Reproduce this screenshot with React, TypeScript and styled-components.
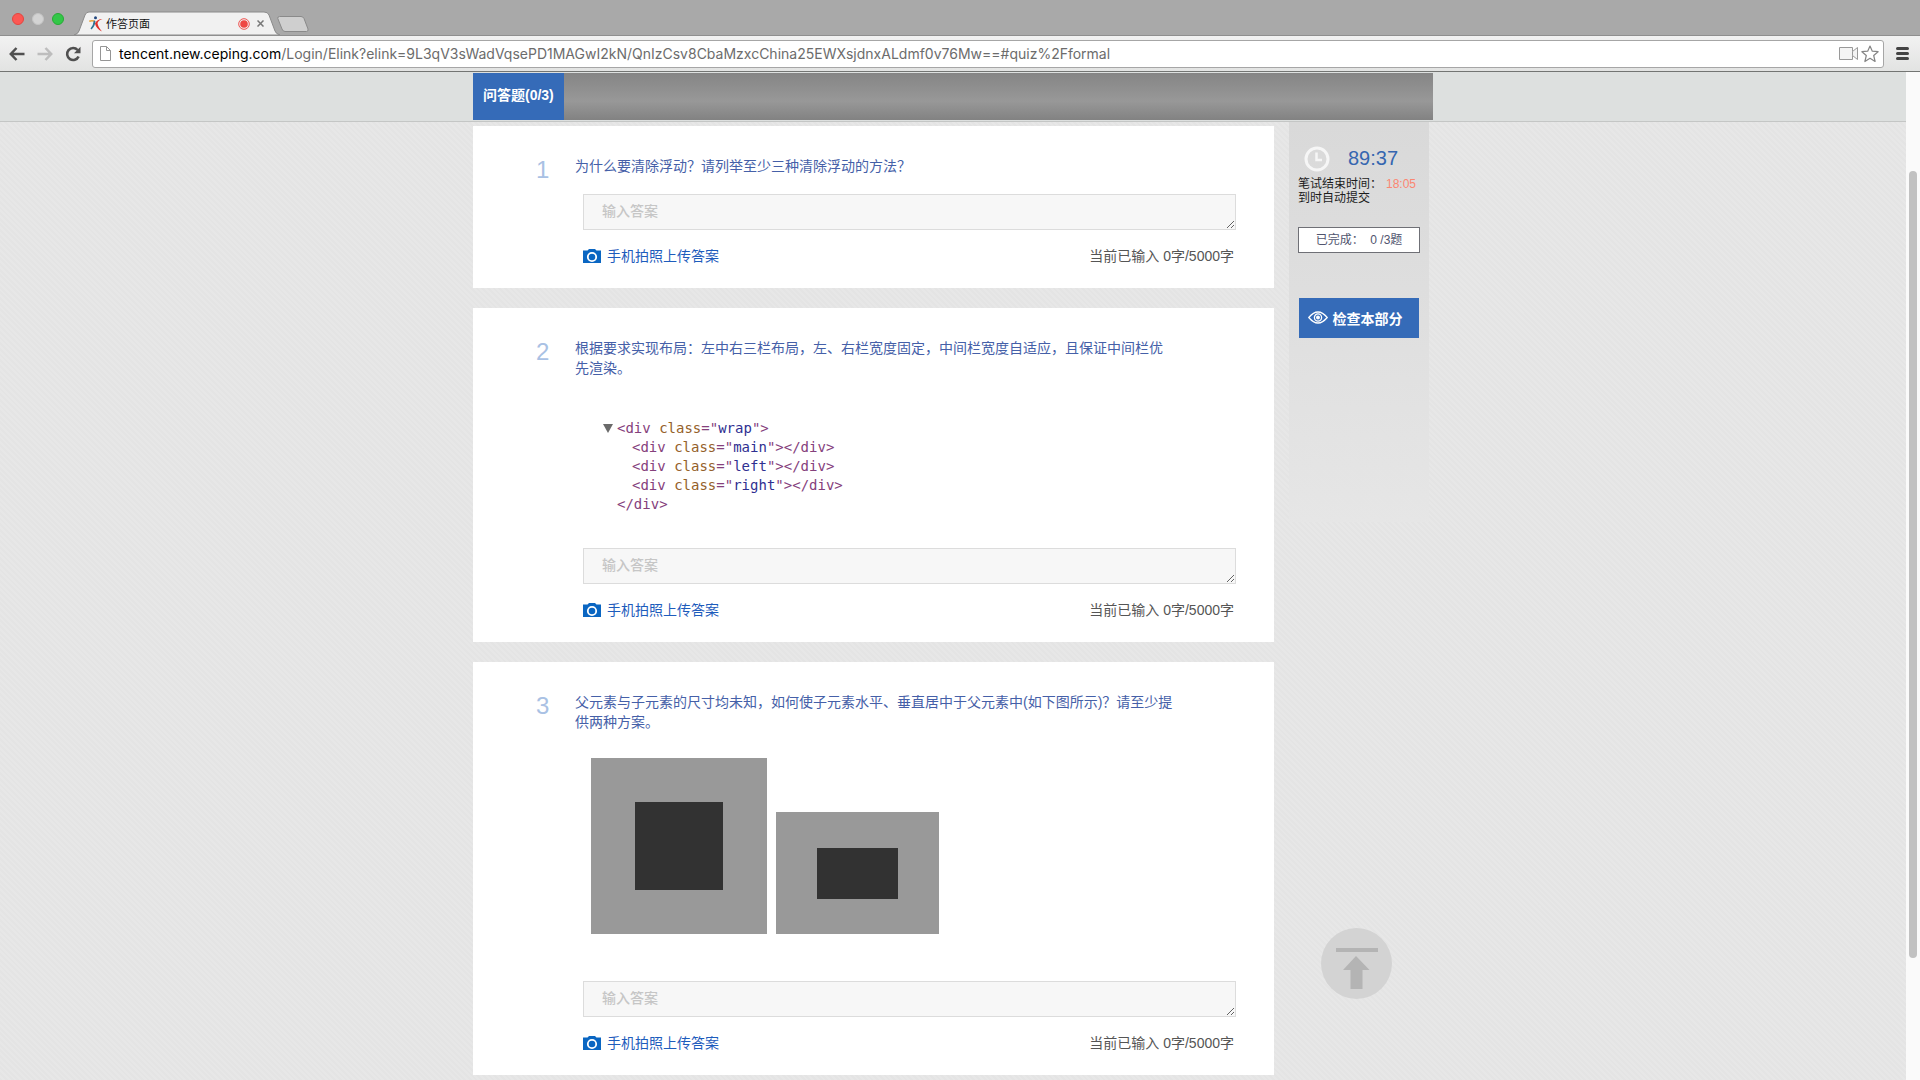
import React from "react";
import styled, { createGlobalStyle } from "styled-components";

const sans = `"Liberation Sans", "Noto Sans CJK SC", sans-serif`;

const GlobalStyle = createGlobalStyle`
  *, *::before, *::after { box-sizing: border-box; }
  body { margin: 0; font-family: ${sans}; font-size: 14px; line-height: 20px; color: #555; }
  button, textarea, input { font-family: inherit; font-size: inherit; }
`;

const Window = styled.div`
  display: flex;
  flex-direction: column;
  min-height: 100vh;
`;

/* ---------- browser chrome ---------- */

const TabStrip = styled.div`
  display: flex;
  align-items: flex-end;
  height: 35px;
  padding-left: 12px;
  background: #a9a9a9;
`;

const Lights = styled.div`
  display: flex;
  gap: 8px;
  padding-bottom: 10px;
`;

const Light = styled.button<{ $color: string; $edge: string }>`
  width: 12px;
  height: 12px;
  padding: 0;
  border: 1px solid ${(p) => p.$edge};
  border-radius: 50%;
  background: ${(p) => p.$color};
`;

const Tab = styled.div`
  display: grid;
  width: 206px;
  height: 24px;
  margin-left: 10px;

  > * { grid-area: 1 / 1; }
`;

const TabShape = styled.svg`
  display: block;
  width: 100%;
  height: 24px;
`;

const TabContent = styled.div`
  display: flex;
  align-items: center;
  gap: 3px;
  padding: 1px 16px 0 15px;
  font-size: 11px;
  line-height: 16px;
  color: #111;
`;

const TabTitle = styled.span`
  flex: 1;
`;

const IconButton = styled.button`
  display: flex;
  padding: 0;
  border: 0;
  background: none;
`;

const CloseTab = styled(IconButton)`
  margin-left: 4px;
`;

const NewTab = styled(IconButton)`
  padding-bottom: 3px;
  margin-left: -3px;
`;

const Toolbar = styled.div`
  display: flex;
  align-items: center;
  height: 37px;
  padding: 0 11px 0 9px;
  border-top: 1px solid #8f8f8f;
  border-bottom: 1px solid #737573;
  background: linear-gradient(#f2f2f2, #e2e3e2);
`;

const NavButtons = styled.div`
  display: flex;
  gap: 12px;
  margin-right: 11px;
`;

const AddressBar = styled.div`
  display: flex;
  flex: 1;
  align-items: center;
  height: 28px;
  padding: 0 4px 0 7px;
  margin-right: 12px;
  border: 1px solid #a6a6a6;
  border-radius: 3px;
  background: #fff;
`;

const Url = styled.div`
  flex: 1;
  margin-left: 8px;
  font-family: Inter, sans-serif;
  font-size: 14px;
  line-height: 20px;
  color: #6c6c6c;

  b { font-weight: 400; color: #000; }
`;

const Star = styled(IconButton)`
  margin-left: 2px;
`;

/* ---------- page ---------- */

const Viewport = styled.div`
  display: flex;
  flex: 1;
`;

const Page = styled.div`
  flex: 1;
  background: repeating-linear-gradient(45deg, #e4e4e4 0 2px, #e7e7e7 2px 4px);
`;

const ScrollTrack = styled.div`
  display: grid;
  grid-template-rows: 99fr 787fr 122fr;
  width: 14px;
  padding: 0 3px;
  background: #fafafa;
`;

const ScrollThumb = styled.div`
  grid-row: 2;
  border-radius: 4px;
  background: #c1c1c1;
`;

const Header = styled.header`
  padding: 1px 0;
  border-bottom: 1px solid #c4c6c5;
  background: #dde0df;
`;

const HeaderNav = styled.nav`
  display: flex;
  max-width: 960px;
  height: 47px;
  margin: 0 auto;
  background: linear-gradient(#858585, #989898 60%, #828282);
`;

const SectionTab = styled.button`
  padding: 0 10px 6px;
  border: 0;
  background: #356bb8;
  color: #fff;
  font-weight: 700;
`;

const Columns = styled.div`
  display: flex;
  align-items: flex-start;
  gap: 15px;
  max-width: 960px;
  margin: 0 auto;
`;

const Questions = styled.main`
  display: flex;
  flex: 1;
  flex-direction: column;
  gap: 20px;
  padding: 4px 0 5px;
`;

const Card = styled.section`
  padding: 30px 38px 22px 63px;
  background: #fff;
`;

const Prompt = styled.div`
  display: grid;
  grid-template-columns: 39px minmax(0, 600px);
`;

const Index = styled.span`
  font-size: 24px;
  line-height: 28px;
  height: 20px;
  color: #a9c1e4;
`;

const PromptText = styled.label`
  color: #4560a8;
`;

const Answer = styled.div`
  margin-left: 47px;
`;

const AnswerBox = styled.textarea`
  display: block;
  width: 100%;
  height: 36px;
  padding: 6px 18px;
  border: 1px solid #dcdcdc;
  border-radius: 0;
  background: #f7f7f7;
  line-height: 20px;
  resize: vertical;
  overflow: hidden;

  &::placeholder { color: #c6c6c6; font-weight: 500; }
`;

const AnswerFooter = styled.div`
  display: flex;
  align-items: center;
  justify-content: space-between;
  padding: 16px 2px 0 0;
`;

const UploadLink = styled.a`
  display: flex;
  align-items: center;
  gap: 6px;
  color: #1d5cbc;
  text-decoration: none;
`;

const Figure = styled.div<{ $top: number; $bottom: number; $left: number }>`
  padding: ${(p) => `${p.$top}px 0 ${p.$bottom}px ${p.$left}px`};
`;

const Code = styled.pre`
  margin: 0;
  font-family: "DejaVu Sans Mono", monospace;
  font-size: 14px;
  line-height: 19px;
  color: #85407c;
`;

const CodeLine = styled.div<{ $indent: number }>`
  display: flex;
  align-items: center;
  padding-left: ${(p) => p.$indent}px;
`;

const Attr = styled.span`
  color: #94602a;
`;

const Value = styled.span`
  color: #2f3091;
`;

const Caret = styled.span`
  width: 10px;
  height: 9px;
  margin-right: 4px;
  clip-path: polygon(0 0, 100% 0, 50% 100%);
  background: #6a6a6a;
`;

const Boxes = styled.div`
  display: flex;
  align-items: flex-end;
  gap: 9px;
`;

const Outer = styled.div<{ $w: number; $h: number }>`
  display: grid;
  place-items: center;
  width: ${(p) => p.$w}px;
  height: ${(p) => p.$h}px;
  background: #999;
`;

const Inner = styled.div<{ $h: number }>`
  width: 50%;
  height: ${(p) => p.$h}px;
  background: #323232;
`;

const Side = styled.aside`
  display: flex;
  flex-direction: column;
  width: 140px;
  min-height: 400px;
  padding: 24px 9px 0;
  margin-right: 4px;
  background: linear-gradient(#d9d9d9, #dfdfdf 50%, rgba(230, 230, 230, 0.9));
  font-size: 12px;
  line-height: 14px;
  color: #1c1c1c;
`;

const Timer = styled.div`
  display: flex;
  align-items: center;
  gap: 18px;
  padding: 0 0 5px 6px;
  font-size: 20px;
  line-height: 26px;
  color: #3566b0;
`;

const TimeLeft = styled.span`
  padding-bottom: 2px;
  line-height: 24px;
`;

const EndTime = styled.span`
  color: #fb8672;
`;

const EndRow = styled.div`
  display: flex;
  justify-content: space-between;
  padding-right: 4px;
`;

const Done = styled.div`
  margin-top: 22px;
  border: 1px solid #6f7076;
  background: #fff;
  line-height: 24px;
  text-align: center;
  white-space: pre;
  color: #50546e;
`;

const CheckButton = styled.button`
  display: flex;
  align-items: center;
  justify-content: center;
  gap: 5px;
  height: 40px;
  padding: 0 8px 1px 0;
  margin: 45px 1px 0;
  border: 0;
  background: #356bb8;
  color: #fff;
  font-size: 14px;
  font-weight: 700;
`;

const TopButton = styled(IconButton)`
  position: fixed;
  right: 528px;
  bottom: 81px;
`;

/* ---------- icons ---------- */

const Favicon = () => (
  <svg width="14" height="16" viewBox="0 0 14 16">
    <circle cx="6.500" cy="1.800" r="1.500" fill="#23477f" />
    <path d="M0 4.500Q3 3.500 6 4.500L5.500 6Q3 5 .5 6Z" fill="#e9a33a" />
    <path d="M4.800 4.500L6.500 5Q6 10.500 2.500 13.500L1.500 12.500Q4.500 9 4.800 4.500Z" fill="#2f7393" />
    <path d="M13.500 3Q9.500 4 8.500 7Q9 11 13 15.500Q7 12.500 6 7.500Q8 3 13.500 3Z" fill="#e1302a" />
  </svg>
);

const RecordIcon = () => (
  <svg width="12" height="12" viewBox="0 0 12 12">
    <circle cx="6" cy="6" r="5.300" fill="none" stroke="#ee5350" strokeWidth="1" />
    <circle cx="6" cy="6" r="3.800" fill="#ee4744" />
  </svg>
);

const CloseIcon = () => (
  <svg width="7" height="7" viewBox="0 0 7 7" stroke="#777" strokeWidth="1.500">
    <path d="M.5 .5 6.500 6.500M6.500 .5 .5 6.500" />
  </svg>
);

const ArrowIcon = ({ color, flip }: { color: string; flip?: boolean }) => (
  <svg width="16" height="16" viewBox="0 0 16 16" fill="none" stroke={color} strokeWidth="2.500">
    <path d={flip ? "M.5 8H14M8.500 2 14.200 8 8.500 14" : "M15.500 8H2M7.500 2 1.800 8 7.500 14"} />
  </svg>
);

const ReloadIcon = () => (
  <svg width="16" height="16" viewBox="0 0 16 16">
    <path d="M12.600 4A6 6 0 1 0 13.600 10.500" fill="none" stroke="#505050" strokeWidth="2.600" />
    <path d="M15.500 .8V7.200H9Z" fill="#505050" />
  </svg>
);

const FileIcon = () => (
  <svg width="11" height="15" viewBox="0 0 11 15" fill="#fff" stroke="#959595">
    <path d="M.5 .5H6.500L10.500 4.500V14.500H.5ZM6.500 .5V4.500H10.500" />
  </svg>
);

const VideoIcon = () => (
  <svg width="20" height="13" viewBox="0 0 20 13" fill="#f4f4f4" stroke="#999">
    <path d="M.5 .5H13.500V4.500L18.500 .5V12.500L13.500 8.500V12.500H.5Z" />
    <path d="M13.500 4.500V8.500" />
  </svg>
);

const StarIcon = () => (
  <svg width="18" height="18" viewBox="0 0 18 18" fill="#fff" stroke="#858585" strokeWidth="1.200" strokeLinejoin="round">
    <path d="M9 1 11.300 6.200 17.100 6.700 12.700 10.500 14.100 16.500 9 13.300 3.900 16.500 5.300 10.500 .9 6.700 6.700 6.200Z" />
  </svg>
);

const MenuIcon = () => (
  <svg width="13" height="13" viewBox="0 0 13 13" stroke="#444" strokeWidth="3" strokeLinecap="round">
    <path d="M1.500 1.500H11.500M1.500 6.500H11.500M1.500 11.500H11.500" />
  </svg>
);

const CameraIcon = () => (
  <svg width="18" height="14" viewBox="0 0 18 14">
    <path d="M0 1.500H4.500L6 0H12L13.500 1.500H18V14H0Z" fill="#0a66c2" />
    <circle cx="9" cy="8" r="4.200" fill="none" stroke="#fff" strokeWidth="1.800" />
  </svg>
);

const ClockIcon = () => (
  <svg width="26" height="26" viewBox="0 0 26 26" fill="none" stroke="#f6f6f6">
    <circle cx="13" cy="13" r="11" strokeWidth="3" />
    <path d="M12.500 6.500V14H18" strokeWidth="2.500" />
  </svg>
);

const EyeIcon = () => (
  <svg width="20" height="13" viewBox="0 0 20 13" fill="none" stroke="#fff" strokeWidth="1.300">
    <path d="M.8 6.500Q10-4.500 19.200 6.500Q10 17.500 .8 6.500Z" />
    <circle cx="10" cy="6.500" r="3.600" />
    <circle cx="10" cy="6.500" r="1.300" fill="#fff" />
  </svg>
);

const TopIcon = () => (
  <svg width="71" height="71" viewBox="0 0 71 71">
    <circle cx="35.500" cy="35.500" r="35.500" fill="#d3d3d3" />
    <path d="M15 20H57V24H15ZM35 28 48.500 42H41.500V61H29.500V42H22Z" fill="#b4b4b4" />
  </svg>
);

/* ---------- content ---------- */

const Tag = ({ name, close }: { name?: string; close?: boolean }) => (
  <span>
    {"<div "}
    <Attr>class</Attr>="<Value>{name}</Value>"{">"}
    {close && "</div>"}
  </span>
);

const LayoutCode = () => (
  <Code>
    <CodeLine $indent={0}>
      <Caret />
      <Tag name="wrap" />
    </CodeLine>
    {["main", "left", "right"].map((name) => (
      <CodeLine key={name} $indent={29}>
        <Tag name={name} close />
      </CodeLine>
    ))}
    <CodeLine $indent={14}>{"</div>"}</CodeLine>
  </Code>
);

const CenteredBoxes = () => (
  <Boxes>
    <Outer $w={176} $h={176}>
      <Inner $h={88} />
    </Outer>
    <Outer $w={163} $h={122}>
      <Inner $h={51} />
    </Outer>
  </Boxes>
);

const questions = [
  {
    text: "为什么要清除浮动？请列举至少三种清除浮动的方法？",
    figure: <Figure $top={18} $bottom={0} $left={0} />,
  },
  {
    text: "根据要求实现布局：左中右三栏布局，左、右栏宽度固定，中间栏宽度自适应，且保证中间栏优先渲染。",
    figure: (
      <Figure $top={41} $bottom={34} $left={67}>
        <LayoutCode />
      </Figure>
    ),
  },
  {
    text: "父元素与子元素的尺寸均未知，如何使子元素水平、垂直居中于父元素中(如下图所示)？请至少提供两种方案。",
    figure: (
      <Figure $top={26} $bottom={47} $left={55}>
        <CenteredBoxes />
      </Figure>
    ),
  },
];

export default function App() {
  return (
    <Window>
      <GlobalStyle />
      <TabStrip>
        <Lights>
          <Light $color="#fc5753" $edge="#e2463f" aria-label="关闭窗口" />
          <Light $color="#d3d3d3" $edge="#c4c4c4" aria-label="最小化" />
          <Light $color="#33c748" $edge="#27aa35" aria-label="全屏" />
        </Lights>
        <Tab>
          <TabShape viewBox="0 0 206 24" preserveAspectRatio="none">
            <path
              d="M0 24Q4 23 5 20L11 4Q12 1 15 1H190Q194 1 195 4L201 20Q202 23 206 24Z"
              fill="#f1f1f1"
              stroke="#8a8a8a"
            />
          </TabShape>
          <TabContent>
            <Favicon />
            <TabTitle>作答页面</TabTitle>
            <RecordIcon />
            <CloseTab aria-label="关闭标签页">
              <CloseIcon />
            </CloseTab>
          </TabContent>
        </Tab>
        <NewTab aria-label="新标签页">
          <svg width="32" height="16" viewBox="0 0 32 16">
            <path d="M2.500 .5H24Q26 .5 27 2.500L31 13Q31.500 15.500 29.500 15.500H8Q6 15.500 5 13L.8 2.500Q.5 .5 2.500 .5Z" fill="#cfcfcf" stroke="#8a8a8a" />
          </svg>
        </NewTab>
      </TabStrip>
      <Toolbar>
        <NavButtons>
          <IconButton aria-label="后退">
            <ArrowIcon color="#505050" />
          </IconButton>
          <IconButton aria-label="前进">
            <ArrowIcon color="#bdbdbd" flip />
          </IconButton>
          <IconButton aria-label="重新加载">
            <ReloadIcon />
          </IconButton>
        </NavButtons>
        <AddressBar>
          <FileIcon />
          <Url>
            <b>tencent.new.ceping.com</b>
            /Login/Elink?elink=9L3qV3sWadVqsePD1MAGwI2kN/QnIzCsv8CbaMzxcChina25EWXsjdnxALdmf0v76Mw==#quiz%2Fformal
          </Url>
          <VideoIcon />
          <Star aria-label="收藏">
            <StarIcon />
          </Star>
        </AddressBar>
        <IconButton aria-label="菜单">
          <MenuIcon />
        </IconButton>
      </Toolbar>
      <Viewport>
        <Page>
          <Header>
            <HeaderNav>
              <SectionTab>问答题(0/3)</SectionTab>
            </HeaderNav>
          </Header>
          <Columns>
            <Questions>
              {questions.map((q, i) => (
                <Card key={i}>
                  <Prompt>
                    <Index>{i + 1}</Index>
                    <PromptText htmlFor={`answer-${i}`}>{q.text}</PromptText>
                  </Prompt>
                  {q.figure}
                  <Answer>
                    <AnswerBox id={`answer-${i}`} placeholder="输入答案" />
                    <AnswerFooter>
                      <UploadLink href="#upload">
                        <CameraIcon />
                        手机拍照上传答案
                      </UploadLink>
                      <span>当前已输入 0字/5000字</span>
                    </AnswerFooter>
                  </Answer>
                </Card>
              ))}
            </Questions>
            <Side>
              <Timer>
                <ClockIcon />
                <TimeLeft>89:37</TimeLeft>
              </Timer>
              <EndRow>
                笔试结束时间：<EndTime>18:05</EndTime>
              </EndRow>
              <div>到时自动提交</div>
              <Done>{"已完成：  0 /3题"}</Done>
              <CheckButton>
                <EyeIcon />
                检查本部分
              </CheckButton>
            </Side>
          </Columns>
        </Page>
        <ScrollTrack>
          <ScrollThumb />
        </ScrollTrack>
      </Viewport>
      <TopButton aria-label="返回顶部">
        <TopIcon />
      </TopButton>
    </Window>
  );
}
